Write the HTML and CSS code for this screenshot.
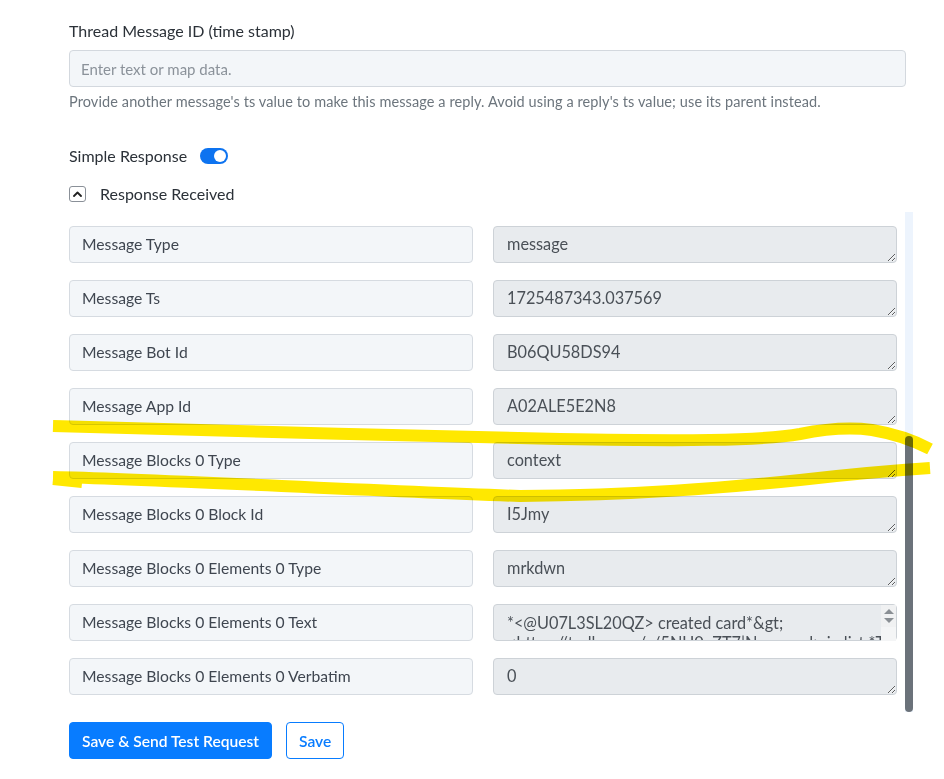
FILE: index.html
```html
<!DOCTYPE html>
<html lang="en">
<head>
  <meta charset="UTF-8" />
  <meta name="viewport" content="width=device-width, initial-scale=1.0"/>
  <title>Send Channel Message</title>
  <link rel="stylesheet" href="styles.css">
</head>
<body>
  <div class="form">
    <div class="field">
      <label for="thread-ts">Thread Message ID (time stamp)</label>
      <input type="text" id="thread-ts" placeholder="Enter text or map data."/>
      <p class="help">Provide another message's ts value to make this message a reply. Avoid using a reply's ts value; use its parent instead.</p>
    </div>

    <div class="switch-row">
      <span>Simple Response</span>
      <span class="switch on"></span>
    </div>

    <div class="collapse-head">
      <span class="collapse-btn">
        <svg width="9" height="6" viewBox="0 0 9 6"><path d="M1 5 L4.5 1.5 L8 5" fill="none" stroke="#222" stroke-width="1.8" stroke-linecap="round" stroke-linejoin="round"/></svg>
      </span>
      <span>Response Received</span>
    </div>

    <div class="response-panel">
      <div class="response-list" id="response-list">
        <div class="response-row">
          <div class="response-key">Ok</div>
          <textarea class="response-value" readonly>true</textarea>
        </div>
        <div class="response-row">
          <div class="response-key">Channel</div>
          <textarea class="response-value" readonly>C07L9F2K4TS</textarea>
        </div>
        <div class="response-row">
          <div class="response-key">Ts</div>
          <textarea class="response-value" readonly>1725487343.037569</textarea>
        </div>
        <div class="response-row">
          <div class="response-key">Message User</div>
          <textarea class="response-value" readonly>U07L3SL20QZ</textarea>
        </div>
        <div class="response-row">
          <div class="response-key">Message Text</div>
          <textarea class="response-value" readonly>created card</textarea>
        </div>
        <div class="response-row">
          <div class="response-key">Message Team</div>
          <textarea class="response-value" readonly>T07L3SKQ8UB</textarea>
        </div>
        <div class="response-row">
          <div class="response-key">Message Bot Profile Id</div>
          <textarea class="response-value" readonly>B06QU58DS94</textarea>
        </div>
        <div class="response-row">
          <div class="response-key">Message Type</div>
          <textarea class="response-value" readonly>message</textarea>
        </div>
        <div class="response-row">
          <div class="response-key">Message Ts</div>
          <textarea class="response-value" readonly>1725487343.037569</textarea>
        </div>
        <div class="response-row">
          <div class="response-key">Message Bot Id</div>
          <textarea class="response-value" readonly>B06QU58DS94</textarea>
        </div>
        <div class="response-row">
          <div class="response-key">Message App Id</div>
          <textarea class="response-value" readonly>A02ALE5E2N8</textarea>
        </div>
        <div class="response-row">
          <div class="response-key">Message Blocks 0 Type</div>
          <textarea class="response-value" readonly>context</textarea>
        </div>
        <div class="response-row">
          <div class="response-key">Message Blocks 0 Block Id</div>
          <textarea class="response-value" readonly>I5Jmy</textarea>
        </div>
        <div class="response-row">
          <div class="response-key">Message Blocks 0 Elements 0 Type</div>
          <textarea class="response-value" readonly>mrkdwn</textarea>
        </div>
        <div class="response-row">
          <div class="response-key">Message Blocks 0 Elements 0 Text</div>
          <div class="value-wrap">
            <textarea class="response-value long" readonly>*&lt;@U07L3SL20QZ&gt; created card*&amp;gt;
&lt;https://trello.com/c/5NU0eZT7|New card&gt; in list *To Do*</textarea>
            <span class="mini-scroll">
              <span class="arrow up"></span>
              <span class="arrow down"></span>
            </span>
          </div>
        </div>
        <div class="response-row">
          <div class="response-key">Message Blocks 0 Elements 0 Verbatim</div>
          <textarea class="response-value" readonly>0</textarea>
        </div>
      </div>
      <div class="scroll-track"><div class="scroll-thumb" id="scroll-thumb"></div></div>
    </div>

    <div class="actions">
      <button class="btn btn-primary">Save &amp; Send Test Request</button>
      <button class="btn btn-outline">Save</button>
    </div>
  </div>

  <!-- hand-drawn highlighter marks on the screenshot -->
  <svg class="marker" width="944" height="779" viewBox="0 0 944 779">
    <path d="M53 426 C 200 430, 400 436, 560 439 C 680 441, 760 441, 800 434 C 830 428, 850 427, 872 430 C 896 434, 915 441, 930 449" />
    <path d="M53 477 C 150 479, 350 490, 520 496 C 640 495, 720 488, 800 480 C 860 473, 900 470, 930 468" />
    <path class="tail" d="M53 480 L82 483" />
  </svg>

  <script>
    var list = document.getElementById("response-list");
    var thumb = document.getElementById("scroll-thumb");
    list.scrollTop = list.scrollHeight;
    var ratio = list.clientHeight / list.scrollHeight;
    thumb.style.height = (list.clientHeight * ratio) + "px";
    thumb.style.marginTop = (list.scrollTop * ratio) + "px";
  </script>
</body>
</html>
```

FILE: styles.css
```css
body {
  font-family: Lato, "Open Sans", sans-serif;
  margin: 0;
  background: #fff;
  color: #2b3138;
}

.form {
  padding: 20px 38px 0 69px;
}

label {
  display: block;
  font-size: 16px;
  line-height: 22px;
  margin-bottom: 8px;
}

input[type="text"] {
  display: block;
  width: 100%;
  box-sizing: border-box;
  height: 37px;
  padding: 0 11px;
  font-family: inherit;
  font-size: 15px;
  background-color: #f3f6f9;
  border: 1px solid #d3d8de;
  border-radius: 4px;
  color: #495057;
}

input::placeholder {
  color: #8b929a;
}

.help {
  margin: 6px 0 0;
  font-size: 14.5px;
  line-height: 18px;
  letter-spacing: 0.1px;
  color: #6c757d;
}

.switch-row {
  display: flex;
  align-items: center;
  gap: 13px;
  margin-top: 34px;
  font-size: 16px;
  line-height: 22px;
}

.switch {
  position: relative;
  width: 28px;
  height: 16px;
  border-radius: 8px;
  background-color: #adb5bd;
}

.switch::after {
  content: "";
  position: absolute;
  top: 2px;
  left: 2px;
  width: 12px;
  height: 12px;
  border-radius: 50%;
  background-color: #fff;
}

.switch.on {
  background-color: #0d73f0;
}

.switch.on::after {
  left: 14px;
}

.collapse-head {
  display: flex;
  align-items: center;
  gap: 14px;
  margin-top: 16px;
  font-size: 16px;
  line-height: 22px;
}

.collapse-btn {
  display: flex;
  align-items: center;
  justify-content: center;
  width: 17px;
  height: 16px;
  box-sizing: border-box;
  border: 1px solid #8a9098;
  border-radius: 3px;
}

.response-panel {
  display: flex;
  margin-top: 7px;
  margin-right: -7px;
  height: 500px;
}

.response-list {
  flex: 1;
  overflow-y: auto;
  scrollbar-width: none;
  box-sizing: border-box;
  padding: 42px 8px 17px 0;
  display: flex;
  flex-direction: column;
  gap: 17px;
}

.scroll-track {
  width: 8px;
  background-color: #edf4fd;
}

.scroll-thumb {
  width: 8px;
  border-radius: 4px;
  background-color: #6b727a;
}

.response-row {
  display: grid;
  grid-template-columns: 1fr 1fr;
  gap: 20px;
  flex-shrink: 0;
}

.response-key,
.response-value {
  box-sizing: border-box;
  height: 37px;
  padding: 7px 12px;
  font-family: inherit;
  line-height: 20px;
  border-radius: 4px;
}

.response-key {
  font-size: 15.7px;
  background-color: #f3f6f9;
  border: 1px solid #d6dbe1;
  color: #3f4650;
}

.response-value {
  display: block;
  width: 100%;
  margin: 0;
  padding-left: 13px;
  font-size: 16.3px;
  background-color: #e8ebee;
  border: 1px solid #cdd2d7;
  color: #4a5057;
  resize: vertical;
}

.value-wrap {
  position: relative;
}

.response-value.long {
  overflow: hidden;
  white-space: pre;
  padding-top: 8px;
}

.mini-scroll {
  position: absolute;
  top: 1px;
  right: 1px;
  width: 15px;
  height: 22px;
  display: flex;
  flex-direction: column;
  align-items: center;
  justify-content: center;
  gap: 4px;
  background-color: #f0f1f2;
}

.mini-scroll::after {
  content: "";
  position: absolute;
  top: 22px;
  left: 0;
  width: 15px;
  height: 14px;
  background-color: #f4f5f6;
}

.arrow {
  width: 0;
  height: 0;
  border-left: 5px solid transparent;
  border-right: 5px solid transparent;
}

.arrow.up {
  border-bottom: 5px solid #8a8f94;
}

.arrow.down {
  border-top: 5px solid #8a8f94;
}

.actions {
  display: flex;
  gap: 14px;
  margin-top: 10px;
}

.btn {
  height: 37px;
  padding: 0 12px;
  font-family: inherit;
  font-size: 15.6px;
  font-weight: 600;
  border-radius: 4px;
  cursor: pointer;
}

.btn-primary {
  background-color: #087cff;
  border: 1px solid #087cff;
  color: #fff;
}

.btn-outline {
  background-color: #fff;
  border: 1px solid #087cff;
  color: #087cff;
}

.marker {
  position: absolute;
  top: 0;
  left: 0;
  pointer-events: none;
  mix-blend-mode: multiply;
}

.marker path {
  fill: none;
  stroke: #ffe800;
  stroke-width: 12;
}

.marker .tail {
  stroke-width: 10;
}
```
